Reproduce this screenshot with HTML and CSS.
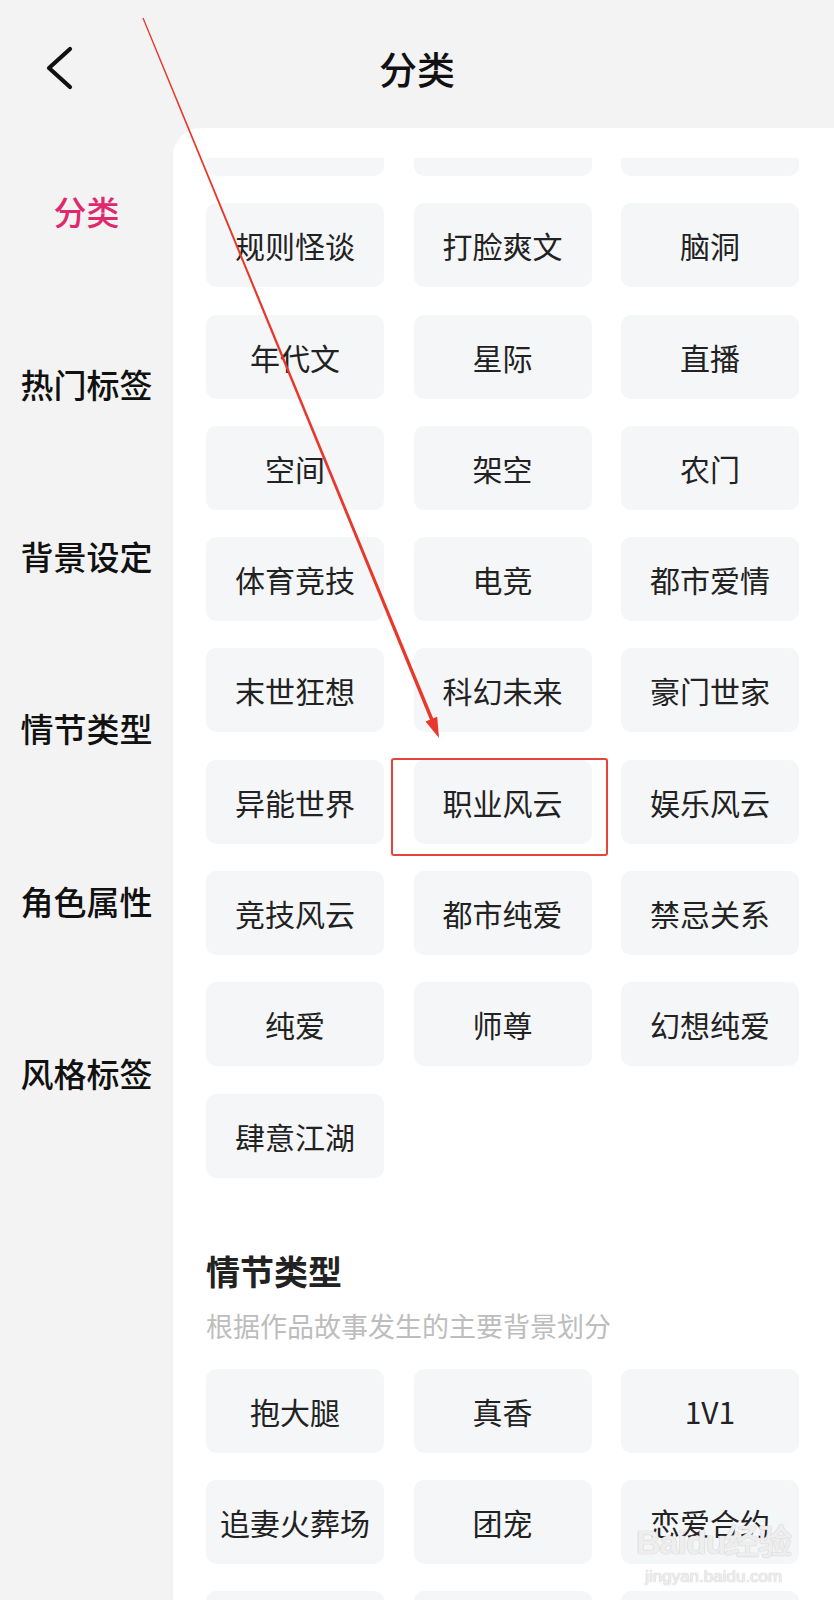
FILE: index.html
```html
<!DOCTYPE html>
<html lang="zh-CN">
  <head>
    <meta charset="UTF-8" />
    <meta name="viewport" content="width=device-width, initial-scale=1.0" />
    <title>分类</title>
    <link rel="stylesheet" href="styles.css">
  </head>
  <body>
    <div class="page">
      <div class="topbar">
        <a class="back" href="#">
          <svg width="40" height="48" viewBox="0 0 40 48">
            <path d="M30 5 L9 24 L30 43" fill="none" stroke="#111" stroke-width="4.2" stroke-linecap="round" stroke-linejoin="round" />
          </svg>
        </a>
        <div class="title">分类</div>
      </div>

      <div class="main">
        <ul class="sidebar">
          <li class="active">分类</li>
          <li>热门标签</li>
          <li>背景设定</li>
          <li>情节类型</li>
          <li>角色属性</li>
          <li>风格标签</li>
        </ul>

        <div class="panel">
          <div class="scroll">
            <div class="content">
              <div class="tags">
                <!-- row scrolled out of view -->
                <span class="tag"></span>
                <span class="tag"></span>
                <span class="tag"></span>
                <span class="tag">规则怪谈</span>
                <span class="tag">打脸爽文</span>
                <span class="tag">脑洞</span>
                <span class="tag">年代文</span>
                <span class="tag">星际</span>
                <span class="tag">直播</span>
                <span class="tag">空间</span>
                <span class="tag">架空</span>
                <span class="tag">农门</span>
                <span class="tag">体育竞技</span>
                <span class="tag">电竞</span>
                <span class="tag">都市爱情</span>
                <span class="tag">末世狂想</span>
                <span class="tag">科幻未来</span>
                <span class="tag">豪门世家</span>
                <span class="tag">异能世界</span>
                <span class="tag">职业风云</span>
                <span class="tag">娱乐风云</span>
                <span class="tag">竞技风云</span>
                <span class="tag">都市纯爱</span>
                <span class="tag">禁忌关系</span>
                <span class="tag">纯爱</span>
                <span class="tag">师尊</span>
                <span class="tag">幻想纯爱</span>
                <span class="tag">肆意江湖</span>
              </div>

              <h2 class="section-title">情节类型</h2>
              <p class="section-desc">根据作品故事发生的主要背景划分</p>
              <div class="tags">
                <span class="tag">抱大腿</span>
                <span class="tag">真香</span>
                <span class="tag">1V1</span>
                <span class="tag">追妻火葬场</span>
                <span class="tag">团宠</span>
                <span class="tag">恋爱合约</span>
                <span class="tag"></span>
                <span class="tag"></span>
                <span class="tag"></span>
              </div>
            </div>
          </div>
        </div>
      </div>

      <!-- red pointer and frame drawn over the list -->
      <svg class="markup" width="834" height="1600" viewBox="0 0 834 1600">
        <polygon points="142.4,18.2 143.6,17.8 433.6,719.3 430.4,720.7" fill="#e8382c" />
        <polygon points="439,738 437.2,716.8 425.6,721.6" fill="#e8382c" />
        <rect x="392" y="759" width="215" height="96" rx="2" fill="none" stroke="#e5443a" stroke-width="2" />
      </svg>

      <div class="watermark">
        <div class="wm-logo">Baidu经验</div>
        <div class="wm-url">jingyan.baidu.com</div>
      </div>
    </div>
  </body>
</html>
```

FILE: styles.css
```css
* {
  box-sizing: border-box;
}
body {
  margin: 0;
  background: #f3f3f3;
  font-family: "Noto Sans CJK SC", "Noto Sans", sans-serif;
  color: #111;
}
.page {
  position: relative;
  width: 834px;
  height: 1600px;
  overflow: hidden;
}

.topbar {
  height: 128px;
  position: relative;
  display: flex;
  align-items: center;
  justify-content: center;
}
.back {
  position: absolute;
  left: 40px;
  top: 44px;
  display: block;
  line-height: 0;
}
.title {
  font-size: 38px;
  font-weight: 500;
  margin-top: 6px;
}

.main {
  display: flex;
  height: 1472px;
}
.sidebar {
  list-style: none;
  margin: -3px 0 0;
  padding: 0;
  width: 173px;
  flex-shrink: 0;
}
.sidebar li {
  height: 172.4px;
  display: flex;
  align-items: center;
  justify-content: center;
  font-size: 33px;
  font-weight: 500;
  color: #111;
}
.sidebar li.active {
  color: #e0286e;
}

.panel {
  flex: 1;
  background: #fff;
  border-top-left-radius: 28px;
  padding-top: 30px;
  overflow: hidden;
}
.scroll {
  height: 100%;
  overflow: hidden;
}
.content {
  margin-top: -66px;
  padding-left: 33px;
}

.tags {
  display: grid;
  grid-template-columns: repeat(3, 178px);
  column-gap: 29.5px;
  row-gap: 27.3px;
}
.tag {
  height: 84px;
  background: #f5f6f8;
  border-radius: 10px;
  display: flex;
  align-items: center;
  justify-content: center;
  font-size: 30px;
  color: #222;
}

.section-title {
  margin: 70px 0 0;
  font-size: 34px;
  line-height: 46px;
  font-weight: 700;
  color: #222;
}
.section-desc {
  margin: 12px 0 23px;
  font-size: 27px;
  line-height: 40px;
  color: #bdbdbd;
}

.markup {
  position: absolute;
  left: 0;
  top: 0;
  pointer-events: none;
}

.watermark {
  position: absolute;
  left: 636px;
  top: 1522px;
  text-align: center;
  pointer-events: none;
  font-family: "Liberation Sans", sans-serif;
  color: rgba(255, 255, 255, 0.7);
  text-shadow: 0 0 1px #c9c9c9, 0 0 1px #c9c9c9;
}
.wm-logo {
  font-size: 34px;
  font-weight: 700;
  line-height: 40px;
  letter-spacing: -1px;
}
.wm-url {
  font-size: 17px;
  line-height: 22px;
  margin-top: 4px;
}
```
